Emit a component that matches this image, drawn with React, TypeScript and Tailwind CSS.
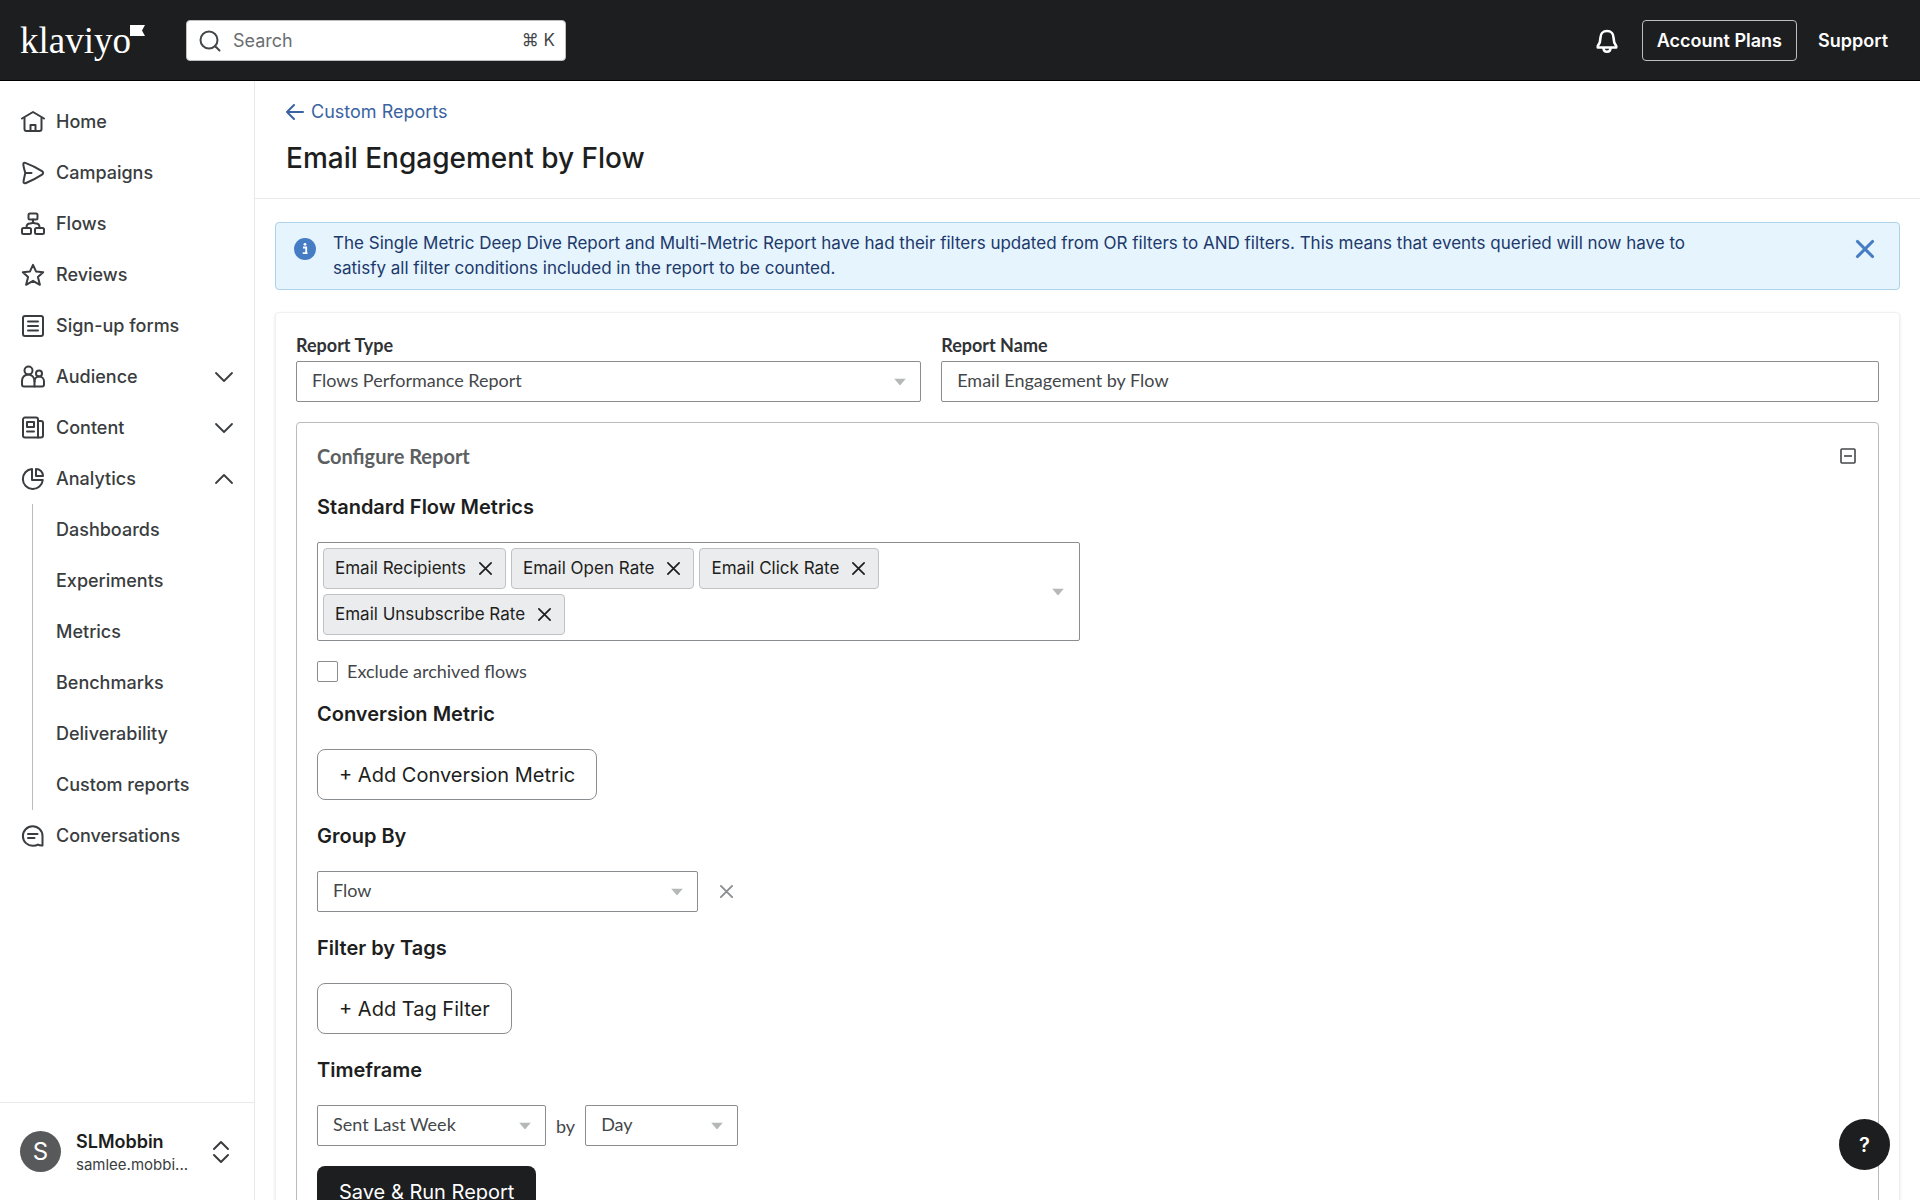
import { useState } from "react";
import type { ReactNode } from "react";

const svgProps = {
  width: 24,
  height: 24,
  viewBox: "0 0 24 24",
  fill: "none",
  stroke: "currentColor",
  strokeWidth: 2,
  strokeLinecap: "round" as const,
  strokeLinejoin: "round" as const,
  "aria-hidden": true,
};

const HomeIcon = () => (
  <svg {...svgProps}>
    <path d="M1 8.500 12 2l11 6.500" />
    <path d="M3.500 8v11a2 2 0 0 0 2 2h13a2 2 0 0 0 2-2V8" />
    <path d="M9.500 21v-6h5v6" />
  </svg>
);

const CampaignsIcon = () => (
  <svg {...svgProps}>
    <path d="M2.300 3.200c0-1.200 1-1.800 2-1.300C10 4 16 7 21 10.200c1.400.9 1.400 2.500 0 3.400C16 16.900 10 20 4.500 22.200c-1.200.4-2.200-.3-2-1.500.2-2.400.9-5 1.800-8.700C3.300 8.500 2.500 5.800 2.300 3.200Z" />
    <path d="M5 12h5.500" />
  </svg>
);

const FlowsIcon = () => (
  <svg {...svgProps}>
    <rect x="7.500" y="1.500" width="9" height="6" rx="1.500" />
    <rect x="1" y="16" width="9" height="6" rx="1.500" />
    <rect x="14" y="16" width="9" height="6" rx="1.500" />
    <path d="M12 7.500v2c0 1.500-1 2-3 2s-3.500.8-3.500 4M12 9.500c0 1.500 1 2 3 2s3.500.8 3.500 4" />
  </svg>
);

const ReviewsIcon = () => (
  <svg {...svgProps}>
    <path d="M12 1.800 15 8.400l7.200.8-5.300 4.800 2 7.800L12 17.800l-6.900 4 2-7.800L1.800 9.200 9 8.400Z" />
  </svg>
);

const FormsIcon = () => (
  <svg {...svgProps}>
    <rect x="2" y="2" width="20" height="20" rx="2" />
    <path d="M7 7.500h10M7 12h10M7 16.500h10" />
  </svg>
);

const AudienceIcon = () => (
  <svg {...svgProps}>
    <circle cx="7.500" cy="5.500" r="4" />
    <circle cx="18" cy="8.500" r="3" />
    <path d="M13.500 21.500H3a2 2 0 0 1-2-2V16c0-3.800 2.800-6.500 6.300-6.500S13.500 12.200 13.500 16Z" />
    <path d="M13.500 21.500H21a2 2 0 0 0 2-2v-3c0-3-2.100-5-4.800-5s-4.700 2-4.700 5" />
  </svg>
);

const ContentIcon = () => (
  <svg {...svgProps}>
    <path d="M17 21.500H4a2 2 0 0 1-2-2v-16a2 2 0 0 1 2-2h11a2 2 0 0 1 2 2Z" />
    <path d="M17 5h3a2 2 0 0 1 2 2v12.500a2 2 0 0 1-2 2h-3" />
    <rect x="6" y="6" width="7" height="5" />
    <path d="M6 15.500h7" />
  </svg>
);

const AnalyticsIcon = () => (
  <svg {...svgProps}>
    <path d="M11 2a10 10 0 1 0 10.800 11H11Z" />
    <path d="M15 2v7h7c0-4-3-7-7-7Z" />
  </svg>
);

const ConversationsIcon = () => (
  <svg {...svgProps}>
    <path d="M21.500 21.500V12A9.800 9.800 0 1 0 12 21.800c2.200 0 3.800-.4 5-1.200 1 .7 2.600 1 4.500.9Z" />
    <path d="M7 10h9.500M7 14h6.500" />
  </svg>
);

const Chevron = ({ up }: { up?: boolean }) => (
  <svg width="20" height="20" viewBox="0 0 20 20" fill="none" stroke="currentColor" strokeWidth="1.800" strokeLinecap="round" strokeLinejoin="round" aria-hidden="true">
    <path d={up ? "m2 14 8-8 8 8" : "m2 6 8 8 8-8"} />
  </svg>
);

const Cross = ({ size, width }: { size: number; width: number }) => (
  <svg width={size} height={size} viewBox="0 0 16 16" fill="none" stroke="currentColor" strokeWidth={width} strokeLinecap="round" aria-hidden="true">
    <path d="m2 2 12 12M14 2 2 14" />
  </svg>
);

const Caret = () => (
  <svg width="12" height="7" viewBox="0 0 12 7" className="pointer-events-none absolute right-[15px] top-1/2 -translate-y-1/2 fill-[#b5b7b9]" aria-hidden="true">
    <path d="M0 0h12L6 7Z" />
  </svg>
);

const navItems = [
  { label: "Home", icon: <HomeIcon /> },
  { label: "Campaigns", icon: <CampaignsIcon /> },
  { label: "Flows", icon: <FlowsIcon /> },
  { label: "Reviews", icon: <ReviewsIcon /> },
  { label: "Sign-up forms", icon: <FormsIcon /> },
];

const analyticsItems = ["Dashboards", "Experiments", "Metrics", "Benchmarks", "Deliverability", "Custom reports"];

const NavLink = ({ label, icon }: { label: string; icon: ReactNode }) => (
  <a href="#" className="flex h-[51px] items-center gap-[11px] pl-[21px] hover:bg-gray-50">
    {icon}
    {label}
  </a>
);

const NavGroup = ({ label, icon, open }: { label: string; icon: ReactNode; open?: boolean }) => (
  <button type="button" aria-expanded={!!open} className="flex h-[51px] w-full items-center gap-[11px] pl-[21px] pr-5 hover:bg-gray-50">
    {icon}
    <span className="flex-1 text-left">{label}</span>
    <Chevron up={open} />
  </button>
);

const Topbar = () => (
  <header className="flex h-[81px] shrink-0 items-center bg-[#1d1e20] pl-5 pr-8 text-white shadow-[inset_0_-1px_0_#000]">
    <a href="#" aria-label="klaviyo" className="flex w-[166px] items-start">
      <span className="font-['Liberation_Serif',serif] text-[37px] leading-10">klaviyo</span>
      <svg width="15" height="11" viewBox="0 0 15 11" fill="#fff" className="-ml-px mt-1" aria-hidden="true">
        <path d="M0 0h15l-3 5.500 3 5.500H0Z" />
      </svg>
    </a>
    <label className="flex h-[41px] w-[380px] items-center rounded border border-[#bcbec0] bg-white pr-[10px] pl-3 text-[#44474a]">
      <svg width="22" height="22" viewBox="0 0 22 22" fill="none" stroke="currentColor" strokeWidth="2" strokeLinecap="round" aria-hidden="true">
        <circle cx="10" cy="10" r="8.500" />
        <path d="m16.500 16.500 4 4" />
      </svg>
      <input type="search" placeholder="Search" aria-label="Search" className="ml-3 min-w-0 flex-1 bg-transparent text-lg outline-none placeholder:text-[#6b6e71]" />
      <kbd className="font-['Inter','DejaVu_Sans',sans-serif] text-[17px]">⌘ K</kbd>
    </label>
    <div className="ml-auto flex items-center gap-[21px] text-lg font-semibold">
      <button type="button" aria-label="Notifications">
        <svg width="28" height="28" viewBox="0 0 28 28" fill="none" stroke="currentColor" strokeWidth="2.600" strokeLinejoin="round" aria-hidden="true">
          <path d="M14 4c-4 0-6.500 2.800-6.500 6.500 0 4.300-.8 6-2.700 8.500v1.500h18.400V19c-1.900-2.500-2.700-4.200-2.700-8.500C20.500 6.800 18 4 14 4Z" />
          <path d="M10.500 21c0 2.500 1.500 3.800 3.500 3.800s3.500-1.300 3.500-3.800" />
        </svg>
      </button>
      <button type="button" className="h-[41px] rounded border border-[#bcbec0] px-[14px]">Account Plans</button>
      <a href="#">Support</a>
    </div>
  </header>
);

const Sidebar = () => (
  <aside className="flex w-[255px] shrink-0 flex-col border-r border-[#e8e9ea] text-[#3a3d40]">
    <nav className="flex-1 pt-[15px] text-lg font-medium">
      {navItems.map((item) => (
        <NavLink key={item.label} label={item.label} icon={item.icon} />
      ))}
      <NavGroup label="Audience" icon={<AudienceIcon />} />
      <NavGroup label="Content" icon={<ContentIcon />} />
      <NavGroup label="Analytics" icon={<AnalyticsIcon />} open />
      <ul className="ml-8 border-l border-[#b9bbbd]">
        {analyticsItems.map((item) => (
          <li key={item}>
            <a href="#" className="flex h-[51px] items-center pl-[23px] hover:bg-gray-50">{item}</a>
          </li>
        ))}
      </ul>
      <NavLink label="Conversations" icon={<ConversationsIcon />} />
    </nav>
    <button type="button" className="flex h-[98px] items-center border-t border-[#e8e9ea] pl-5 pr-6 text-left">
      <span className="flex size-[41px] items-center justify-center rounded-full bg-[#57595b] text-2xl text-white">S</span>
      <span className="ml-[15px] flex-1 pt-[2px]">
        <span className="block text-lg leading-6 font-semibold text-[#1d1e20]">SLMobbin</span>
        <span className="block text-[15px] leading-[22px]">samlee.mobbi...</span>
      </span>
      <svg width="18" height="24" viewBox="0 0 18 24" fill="none" stroke="currentColor" strokeWidth="2" strokeLinecap="round" strokeLinejoin="round" aria-hidden="true">
        <path d="m2 9 7-7 7 7M2 15l7 7 7-7" />
      </svg>
    </button>
  </aside>
);

const Select = ({ id, value, className, label }: { id: string; value: string; className: string; label?: string }) => (
  <div className={`relative font-['Lato',sans-serif] ${className}`}>
    <select id={id} aria-label={label} defaultValue={value} className="block h-[41px] w-full appearance-none rounded-xs border border-[#8b8e91] bg-white px-[15px] pb-[3px] text-lg text-[#44474a]">
      <option>{value}</option>
    </select>
    <Caret />
  </div>
);

const Heading = ({ children }: { children: ReactNode }) => (
  <h3 className="text-xl leading-7 font-semibold text-[#1d1e20]">{children}</h3>
);

const AddButton = ({ children }: { children: ReactNode }) => (
  <button type="button" className="mt-[21px] block h-[51px] rounded-lg border border-[#8b8e91] px-[21px] text-xl text-[#1d1e20]">
    {children}
  </button>
);

const Banner = ({ onClose }: { onClose: () => void }) => (
  <div role="status" className="mb-[22px] flex items-start rounded border border-[#abd3ea] bg-[#e5f4fd] py-2 pr-6 pl-[18px]">
    <svg width="22" height="22" viewBox="0 0 22 22" className="mt-[7px] shrink-0" aria-hidden="true">
      <circle cx="11" cy="11" r="11" fill="#467cc4" />
      <path d="M9 9.500h3.200V15M8.700 15.200h4.800" stroke="#fff" strokeWidth="1.800" fill="none" />
      <circle cx="11" cy="6.300" r="1.400" fill="#fff" />
    </svg>
    <p className="ml-[17px] max-w-[1400px] text-[17px] leading-[25px] text-[#20386b]">
      The Single Metric Deep Dive Report and Multi-Metric Report have had their filters updated from OR filters to AND filters. This means that events queried will now have to satisfy all filter conditions included in the report to be counted.
    </p>
    <button type="button" aria-label="Dismiss" onClick={onClose} className="mt-2 ml-auto text-[#467cc4]">
      <Cross size={20} width={2.500} />
    </button>
  </div>
);

const App = () => {
  const [showBanner, setShowBanner] = useState(true);
  const [metrics, setMetrics] = useState(["Email Recipients", "Email Open Rate", "Email Click Rate", "Email Unsubscribe Rate"]);

  return (
    <div className="flex h-screen flex-col overflow-hidden bg-white font-['Inter',sans-serif]">
      <Topbar />
      <div className="flex min-h-0 flex-1">
        <Sidebar />
        <main className="min-w-0 flex-1 overflow-y-auto [scrollbar-width:none]">
          <div className="border-b border-[#e8e9ea] px-[31px] pt-[17px] pb-5">
            <a href="#" className="flex items-center gap-[7px] text-lg leading-7 text-[#3a639f]">
              <svg width="18" height="18" viewBox="0 0 18 18" fill="none" stroke="currentColor" strokeWidth="2" strokeLinecap="round" strokeLinejoin="round" aria-hidden="true">
                <path d="M17 9H1m7-7L1 9l7 7" />
              </svg>
              Custom Reports
            </a>
            <h1 className="mt-3 text-[28px] leading-10 font-medium text-[#1d1e20]">Email Engagement by Flow</h1>
          </div>

          <div className="px-5 pt-[23px]">
            {showBanner && <Banner onClose={() => setShowBanner(false)} />}

            <section className="rounded border border-[#f0f0f1] p-5 pb-10 shadow-sm">
              <div className="grid grid-cols-[2fr_3fr] gap-5 font-['Lato',sans-serif]">
                <div>
                  <label htmlFor="type" className="block pb-1 text-lg leading-6 font-bold text-[#303336]">Report Type</label>
                  <Select id="type" value="Flows Performance Report" className="w-full" />
                </div>
                <div>
                  <label htmlFor="name" className="block pb-1 text-lg leading-6 font-bold text-[#303336]">Report Name</label>
                  <input id="name" type="text" defaultValue="Email Engagement by Flow" className="block h-[41px] w-full rounded-xs border border-[#8b8e91] px-[15px] pb-[3px] text-lg text-[#44474a]" />
                </div>
              </div>

              <div className="mt-5 rounded border border-[#b9bbbd] px-5 pt-[19px] pb-10">
                <div className="flex items-center justify-between">
                  <h2 className="font-['Lato',sans-serif] text-xl leading-7 font-bold text-[#5c5f62]">Configure Report</h2>
                  <button type="button" aria-label="Collapse" className="mr-[2px] text-[#44474a]">
                    <svg width="16" height="16" viewBox="0 0 16 16" fill="none" stroke="currentColor" strokeWidth="1.600" aria-hidden="true">
                      <rect x="1" y="1" width="14" height="14" rx="1" />
                      <path d="M4 8h8" />
                    </svg>
                  </button>
                </div>

                <div className="mt-[23px]">
                  <Heading>Standard Flow Metrics</Heading>
                  <div className="relative mt-[21px] w-[763px] rounded-xs border border-[#8b8e91] py-[5px] pr-40 pl-[5px]">
                    <ul className="flex flex-wrap gap-[5px]">
                      {metrics.map((metric) => (
                        <li key={metric} className="flex h-[41px] items-center gap-3 rounded border border-[#bfc2c4] bg-[#ebecee] pr-3 pl-[11px] text-[17px] text-[#1d1e20]">
                          {metric}
                          <button type="button" aria-label={`Remove ${metric}`} onClick={() => setMetrics(metrics.filter((m) => m !== metric))}>
                            <Cross size={15} width={1.800} />
                          </button>
                        </li>
                      ))}
                    </ul>
                    <Caret />
                  </div>
                </div>

                <label className="mt-[19px] flex h-[22px] items-center gap-[9px] font-['Lato',sans-serif] text-lg text-[#44474a]">
                  <input type="checkbox" className="size-[21px] appearance-none rounded-xs border border-[#8b8e91] checked:bg-[#1d1e20]" />
                  Exclude archived flows
                </label>

                <div className="mt-[18px]">
                  <Heading>Conversion Metric</Heading>
                  <AddButton>+ Add Conversion Metric</AddButton>
                </div>

                <div className="mt-[22px]">
                  <Heading>Group By</Heading>
                  <div className="mt-[21px] flex items-center gap-[21px]">
                    <Select id="group" value="Flow" label="Group by" className="w-[381px]" />
                    <button type="button" aria-label="Remove grouping" className="text-[#8b8e91]">
                      <Cross size={15} width={2} />
                    </button>
                  </div>
                </div>

                <div className="mt-[22px]">
                  <Heading>Filter by Tags</Heading>
                  <AddButton>+ Add Tag Filter</AddButton>
                </div>

                <div className="mt-[22px]">
                  <Heading>Timeframe</Heading>
                  <div className="mt-[21px] flex items-center gap-[10px] font-['Lato',sans-serif] text-lg text-[#44474a]">
                    <Select id="range" value="Sent Last Week" label="Timeframe" className="w-[229px]" />
                    by
                    <Select id="interval" value="Day" label="Interval" className="w-[153px]" />
                  </div>
                </div>

                <button type="button" className="mt-5 h-[51px] rounded-lg bg-[#1d1e20] px-[22px] text-xl text-white">Save &amp; Run Report</button>
              </div>
            </section>
          </div>
        </main>
      </div>
      <button type="button" aria-label="Help" className="fixed right-[30px] bottom-[30px] size-[51px] rounded-full bg-[#1d1e20] text-xl font-semibold text-white">?</button>
    </div>
  );
};

export default App;
